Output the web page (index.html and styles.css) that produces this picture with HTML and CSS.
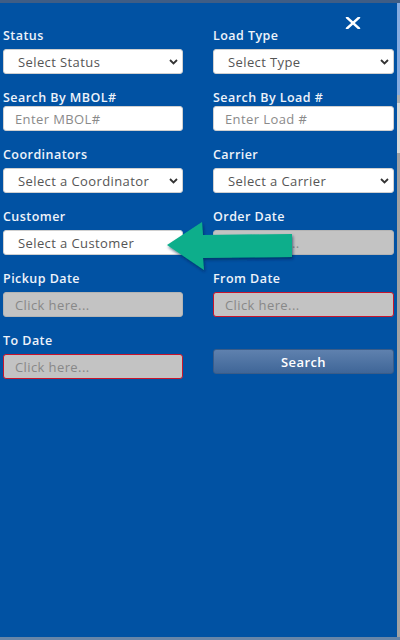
FILE: index.html
```html
<!DOCTYPE html>
<html>
<head>
<meta charset="utf-8">
<link rel="stylesheet" href="styles.css">
</head>
<body>
<div class="screen">
  <div class="topbar"></div>
  <div class="middle">
    <div class="panel">
      <div class="close-row">
        <svg class="close" width="16" height="12" viewBox="0 0 16 12"><path d="M2 0.5 L14 11.5 M14 0.5 L2 11.5" stroke="#fff" stroke-width="2.4" stroke-linecap="round"/></svg>
      </div>
      <div class="form">
        <div class="field">
          <div class="label">Status</div>
          <div class="select"><span>Select Status</span><svg class="chev" width="9" height="6" viewBox="0 0 9 6"><path d="M1 1 L4.5 4.5 L8 1" stroke="#333" stroke-width="1.8" fill="none"/></svg></div>
        </div>
        <div class="field">
          <div class="label">Load Type</div>
          <div class="select"><span>Select Type</span><svg class="chev" width="9" height="6" viewBox="0 0 9 6"><path d="M1 1 L4.5 4.5 L8 1" stroke="#333" stroke-width="1.8" fill="none"/></svg></div>
        </div>
        <div class="field">
          <div class="label tight">Search By MBOL#</div>
          <div class="input">Enter MBOL#</div>
        </div>
        <div class="field">
          <div class="label tight">Search By Load #</div>
          <div class="input">Enter Load #</div>
        </div>
        <div class="field">
          <div class="label">Coordinators</div>
          <div class="select"><span>Select a Coordinator</span><svg class="chev" width="9" height="6" viewBox="0 0 9 6"><path d="M1 1 L4.5 4.5 L8 1" stroke="#333" stroke-width="1.8" fill="none"/></svg></div>
        </div>
        <div class="field">
          <div class="label">Carrier</div>
          <div class="select"><span>Select a Carrier</span><svg class="chev" width="9" height="6" viewBox="0 0 9 6"><path d="M1 1 L4.5 4.5 L8 1" stroke="#333" stroke-width="1.8" fill="none"/></svg></div>
        </div>
        <div class="field">
          <div class="label">Customer</div>
          <div class="select plain"><span>Select a Customer</span></div>
        </div>
        <div class="field">
          <div class="label">Order Date</div>
          <div class="input date">Click here...</div>
        </div>
        <div class="field">
          <div class="label">Pickup Date</div>
          <div class="input date">Click here...</div>
        </div>
        <div class="field">
          <div class="label">From Date</div>
          <div class="input date error">Click here...</div>
        </div>
        <div class="field">
          <div class="label">To Date</div>
          <div class="input date error">Click here...</div>
        </div>
        <div class="field button-cell">
          <button class="search">Search</button>
        </div>
      </div>
      <svg class="arrow" width="140" height="60" viewBox="0 0 140 60">
        <defs>
          <filter id="sh" x="-10%" y="-20%" width="130%" height="150%">
            <feDropShadow dx="1" dy="2" stdDeviation="1.5" flood-color="#00224a" flood-opacity="0.6"/>
          </filter>
        </defs>
        <polygon filter="url(#sh)" fill="#0bae8b" points="4,31 39,8 40,21 129,20 129,43 40,44 41,56"/>
      </svg>
    </div>
    <div class="edge"></div>
  </div>
  <div class="bottombar"></div>
</div>
</body>
</html>
```
FILE: styles.css
```css
* { box-sizing: border-box; }
html, body { margin: 0; padding: 0; }
body {
  width: 400px;
  height: 640px;
  overflow: hidden;
  font-family: "Open Sans", "Noto Sans", sans-serif;
  background: #a5a5a5;
}
.screen {
  display: flex;
  flex-direction: column;
  height: 640px;
}
.topbar {
  height: 3px;
  background: #3f5d85;
}
.bottombar {
  height: 3px;
  background: #6886a8;
}
.middle {
  flex: 1;
  display: flex;
}
.panel {
  position: relative;
  flex: 1;
  background: #0152a3;
  padding: 14px 3px 0 3px;
}
.edge {
  width: 3px;
  background: linear-gradient(to bottom, #86ace0 0, #86ace0 92px, #b0b0b0 92px, #b0b0b0 100px, #d9d9d9 100px, #d9d9d9 150px, #a2a2a2 150px);
}
.close-row {
  height: 12px;
  display: flex;
  justify-content: flex-end;
  padding-right: 33px;
}
.close { display: block; }
.form {
  display: grid;
  grid-template-columns: 180px 181px;
  column-gap: 30px;
  row-gap: 17px;
}
.field {
  display: flex;
  flex-direction: column;
}
.label {
  font-size: 12.5px;
  line-height: 14px;
  font-weight: 600;
  letter-spacing: 0.45px;
  color: #eef3fa;
  margin-bottom: 6px;
  white-space: nowrap;
}
.label.tight { margin-bottom: 1px; }
.select, .input {
  height: 25px;
  border-radius: 3px;
  background: #fff;
  border: 1px solid #d0d0d0;
  font-size: 13px;
  letter-spacing: 0.4px;
  display: flex;
  align-items: center;
  white-space: nowrap;
}
.select {
  justify-content: space-between;
  padding: 0 4px 0 14px;
  color: #555;
}
.chev { display: block; }
.input {
  padding: 0 11px;
  color: #8a8a8a;
}
.input.date {
  background: #c3c3c3;
  border-color: #b4b4b4;
  color: #888;
}
.input.date.error {
  border: 1px solid #c8152c;
}
.button-cell {
  padding-top: 15px;
}
.search {
  height: 25px;
  width: 100%;
  border-radius: 3px;
  border: 1px solid #3a5c88;
  background: linear-gradient(to bottom, #5f81ae, #3f6698);
  color: #fff;
  font-family: "Open Sans", "Noto Sans", sans-serif;
  font-size: 13px;
  letter-spacing: 0.4px;
  font-weight: 600;
  padding: 0;
}
.arrow {
  position: absolute;
  left: 163px;
  top: 211px;
}
```
